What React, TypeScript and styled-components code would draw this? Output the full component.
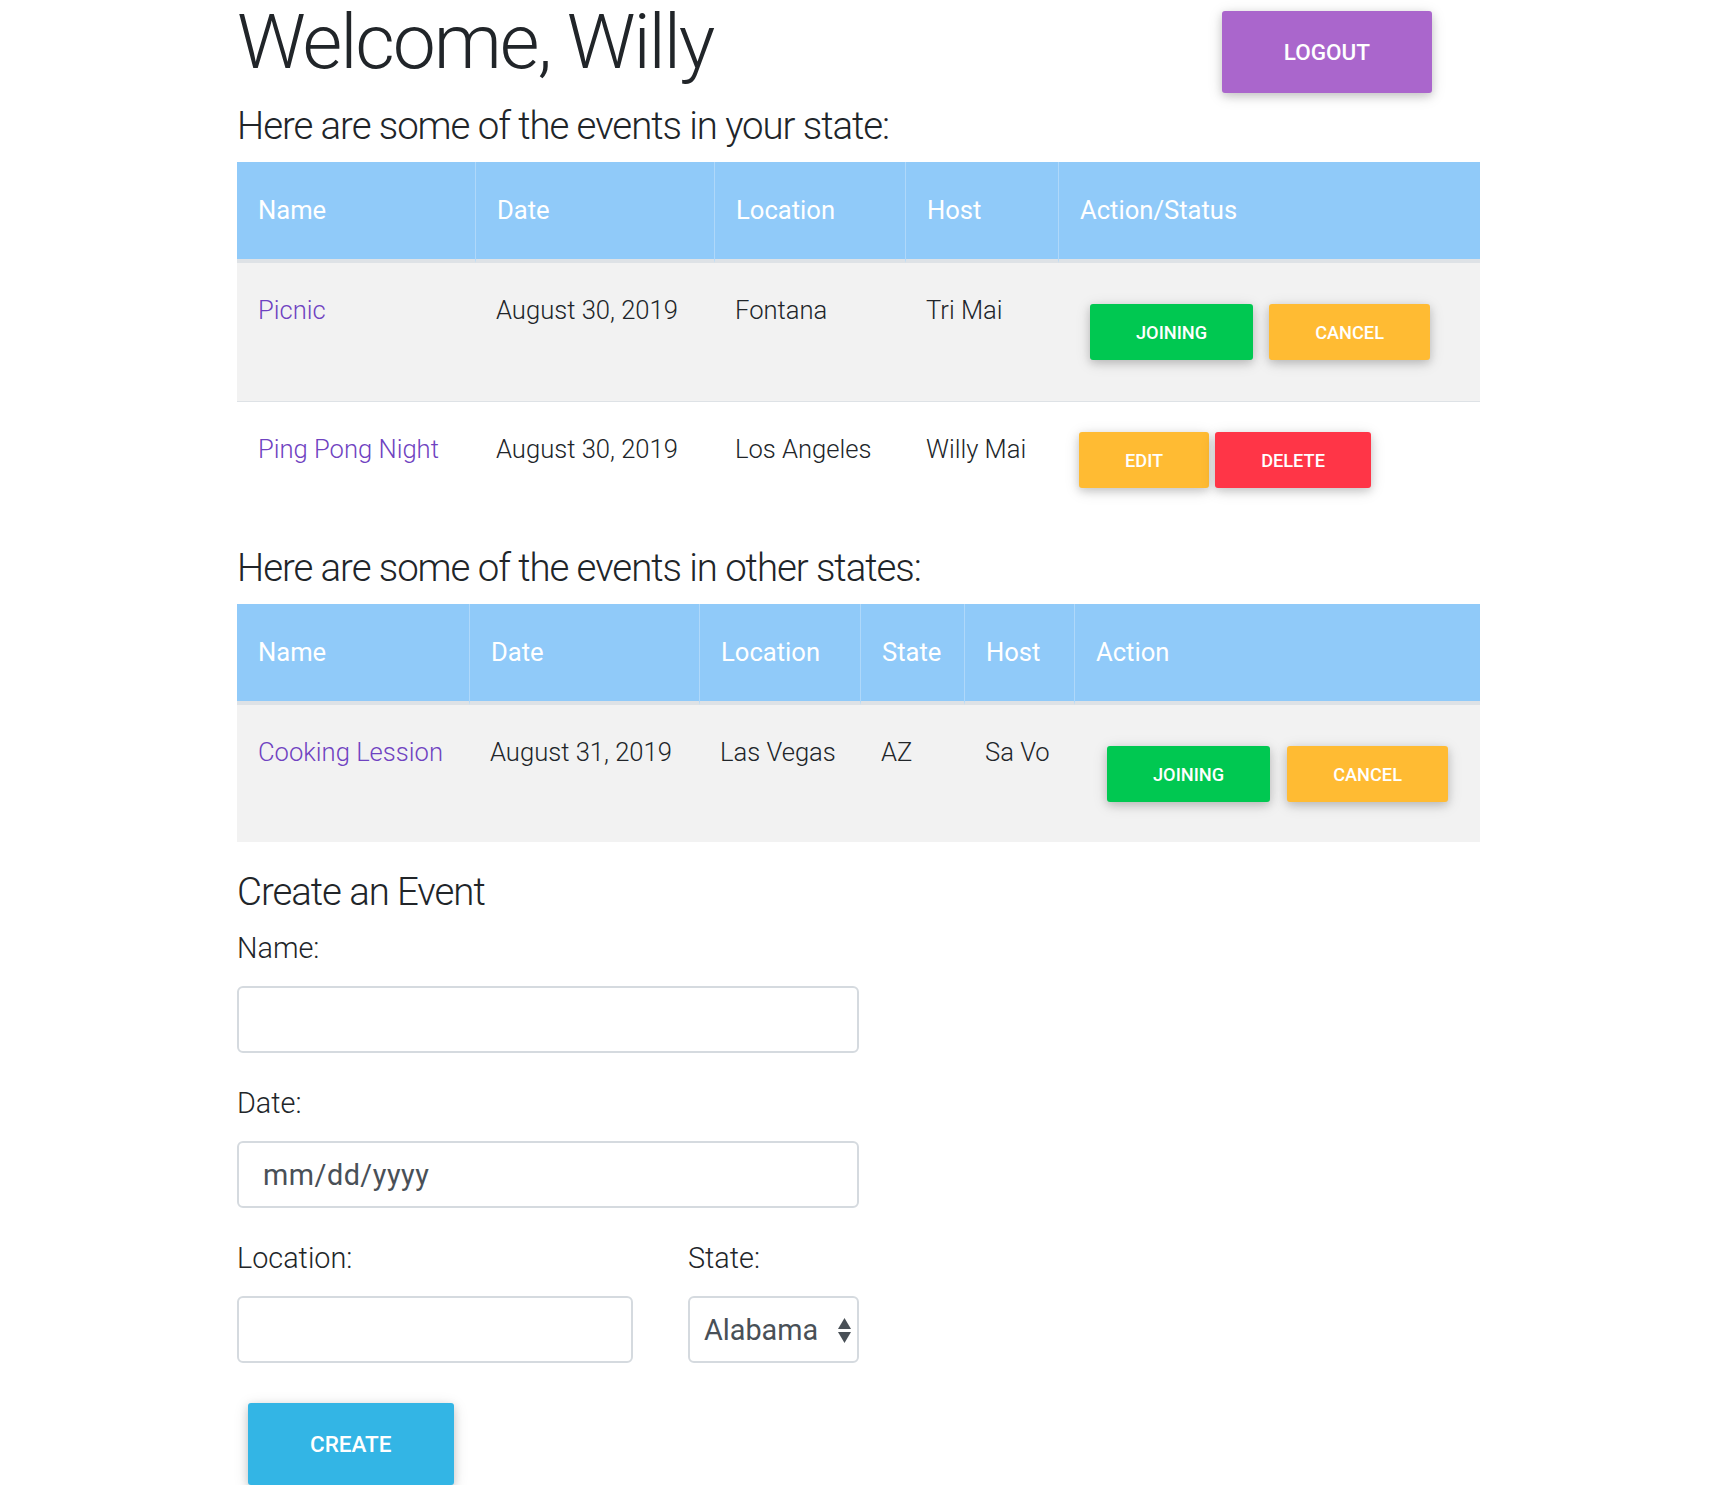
import React from "react";
import styled, { createGlobalStyle } from "styled-components";

const GlobalStyle = createGlobalStyle`
  html, body {
    margin: 0;
    padding: 0;
    background: #ffffff;
  }
  body {
    font-family: Roboto, "Noto Sans", "Liberation Sans", sans-serif;
    font-weight: 300;
    color: #212529;
  }
  *, *::before, *::after {
    box-sizing: border-box;
  }
`;

const FONT = `Roboto, "Noto Sans", "Liberation Sans", sans-serif`;

const Page = styled.main`
  width: 1243px;
  margin-left: calc(50% - 620.5px);
`;

const HeaderRow = styled.header`
  display: flex;
  justify-content: space-between;
  align-items: flex-start;
  padding-right: 48px;
  margin-bottom: 10px;
`;

const Title = styled.h1`
  margin: 0;
  font-family: ${FONT};
  font-size: 76.8px;
  line-height: 84px;
  font-weight: 300;
  letter-spacing: -2.1px;
  color: #212529;
`;

const SectionTitle = styled.h4<{ $mb?: number }>`
  margin: 0 0 ${(p) => p.$mb ?? 13}px;
  font-family: ${FONT};
  font-size: 38.4px;
  line-height: 46px;
  font-weight: 300;
  letter-spacing: -1.05px;
  color: #212529;
`;

const Button = styled.button<{ $bg: string; $size?: "sm" | "lg" }>`
  border: 0;
  border-radius: 3px;
  background: ${(p) => p.$bg};
  color: #ffffff;
  font-family: ${FONT};
  font-weight: 500;
  text-transform: uppercase;
  white-space: nowrap;
  cursor: pointer;
  height: ${(p) => (p.$size === "lg" ? 82 : 56)}px;
  padding: 0 ${(p) => (p.$size === "lg" ? 62 : 46)}px;
  font-size: ${(p) => (p.$size === "lg" ? 22.5 : 18.2)}px;
  box-shadow: 0 3px 8px 0 rgba(0, 0, 0, 0.16), 0 3px 16px 0 rgba(0, 0, 0, 0.12);
`;

const LogoutButton = styled(Button)`
  margin-top: 11px;
`;

const CreateButton = styled(Button)`
  margin: 40px 0 0 11px;
`;

const Table = styled.table`
  width: 100%;
  table-layout: fixed;
  border-collapse: separate;
  border-spacing: 0;
  margin-bottom: 27px;
`;

const Col = styled.col<{ $w: number }>`
  width: ${(p) => p.$w}px;
`;

const HeadCell = styled.th`
  background: #90caf9;
  color: #ffffff;
  font-family: ${FONT};
  font-weight: 400;
  font-size: 25.6px;
  line-height: 39px;
  text-align: left;
  padding: 29px 21px;
  white-space: nowrap;
  border-bottom: 4px solid #dee2e6;
  & + & {
    border-left: 1px solid rgba(255, 255, 255, 0.28);
  }
`;

const BodyRow = styled.tr<{ $striped?: boolean; $divider?: boolean }>`
  background: ${(p) => (p.$striped ? "#f2f2f2" : "#ffffff")};
  & > td {
    border-top: ${(p) => (p.$divider ? "1px solid #dee2e6" : "0")};
  }
`;

const Cell = styled.td`
  font-family: ${FONT};
  font-weight: 300;
  font-size: 25.6px;
  line-height: 39px;
  color: #212529;
  padding: 28px 21px;
  vertical-align: top;
  white-space: nowrap;
`;

const EventLink = styled.a`
  color: #6f42c1;
  text-decoration: none;
`;

const ActionGroup = styled.div<{ $gap: number; $mt: number; $mb: number; $ml: number }>`
  display: flex;
  gap: ${(p) => p.$gap}px;
  margin: ${(p) => p.$mt}px 0 ${(p) => p.$mb}px ${(p) => p.$ml}px;
`;

const Form = styled.form`
  width: 622px;
  display: flex;
  flex-direction: column;
  align-items: flex-start;
`;

const FieldGroup = styled.div`
  width: 100%;
  margin-bottom: 29px;
`;

const SplitRow = styled.div`
  width: 100%;
  display: grid;
  grid-template-columns: 396px 171px;
  column-gap: 55px;
`;

const Label = styled.label`
  display: block;
  font-family: ${FONT};
  font-weight: 300;
  font-size: 28.8px;
  line-height: 43px;
  margin-bottom: 16px;
  color: #212529;
`;

const TextInput = styled.input`
  display: block;
  width: 100%;
  height: 67px;
  border: 2px solid #d5dadf;
  border-radius: 6px;
  padding: 0 24px;
  font-family: ${FONT};
  font-weight: 400;
  font-size: 28.8px;
  letter-spacing: 0.5px;
  color: #495057;
  background: #ffffff;
  outline: none;
  &::placeholder {
    color: #495057;
    opacity: 1;
  }
`;

const SelectWrap = styled.div`
  position: relative;
  width: 100%;
`;

const Select = styled.select`
  display: block;
  width: 100%;
  height: 67px;
  appearance: none;
  -webkit-appearance: none;
  border: 2px solid #d5dadf;
  border-radius: 6px;
  padding: 0 30px 0 14px;
  font-family: ${FONT};
  font-weight: 400;
  font-size: 28.8px;
  color: #495057;
  background: #ffffff;
  outline: none;
`;

const SelectArrows = styled.svg`
  position: absolute;
  right: 8px;
  top: 22px;
  width: 13px;
  height: 25px;
  pointer-events: none;
`;

type Btn = { label: string; bg: string };

const JOIN_CANCEL: Btn[] = [
  { label: "Joining", bg: "#00c851" },
  { label: "Cancel", bg: "#ffbb33" },
];
const EDIT_DELETE: Btn[] = [
  { label: "Edit", bg: "#ffbb33" },
  { label: "Delete", bg: "#ff3547" },
];

const Actions: React.FC<{ items: Btn[]; gap: number; mt: number; mb: number; ml: number }> = ({
  items,
  gap,
  mt,
  mb,
  ml,
}) => (
  <ActionGroup $gap={gap} $mt={mt} $mb={mb} $ml={ml}>
    {items.map((b) => (
      <Button key={b.label} type="button" $bg={b.bg}>
        {b.label}
      </Button>
    ))}
  </ActionGroup>
);

export default function App() {
  return (
    <>
      <GlobalStyle />
      <Page>
        <HeaderRow>
          <Title>Welcome, Willy</Title>
          <LogoutButton type="button" $bg="#aa66cc" $size="lg">
            Logout
          </LogoutButton>
        </HeaderRow>

        <SectionTitle>Here are some of the events in your state:</SectionTitle>
        <Table>
          <colgroup>
            <Col $w={238} />
            <Col $w={239} />
            <Col $w={191} />
            <Col $w={153} />
            <Col $w={422} />
          </colgroup>
          <thead>
            <tr>
              <HeadCell>Name</HeadCell>
              <HeadCell>Date</HeadCell>
              <HeadCell>Location</HeadCell>
              <HeadCell>Host</HeadCell>
              <HeadCell>Action/Status</HeadCell>
            </tr>
          </thead>
          <tbody>
            <BodyRow $striped>
              <Cell>
                <EventLink href="#">Picnic</EventLink>
              </Cell>
              <Cell>August 30, 2019</Cell>
              <Cell>Fontana</Cell>
              <Cell>Tri Mai</Cell>
              <Cell>
                <Actions items={JOIN_CANCEL} gap={16} mt={13} mb={13} ml={11} />
              </Cell>
            </BodyRow>
            <BodyRow $divider>
              <Cell>
                <EventLink href="#">Ping Pong Night</EventLink>
              </Cell>
              <Cell>August 30, 2019</Cell>
              <Cell>Los Angeles</Cell>
              <Cell>Willy Mai</Cell>
              <Cell>
                <Actions items={EDIT_DELETE} gap={6} mt={2} mb={2} ml={0} />
              </Cell>
            </BodyRow>
          </tbody>
        </Table>

        <SectionTitle>Here are some of the events in other states:</SectionTitle>
        <Table>
          <colgroup>
            <Col $w={232} />
            <Col $w={230} />
            <Col $w={161} />
            <Col $w={104} />
            <Col $w={110} />
            <Col $w={406} />
          </colgroup>
          <thead>
            <tr>
              <HeadCell>Name</HeadCell>
              <HeadCell>Date</HeadCell>
              <HeadCell>Location</HeadCell>
              <HeadCell>State</HeadCell>
              <HeadCell>Host</HeadCell>
              <HeadCell>Action</HeadCell>
            </tr>
          </thead>
          <tbody>
            <BodyRow $striped>
              <Cell>
                <EventLink href="#">Cooking Lession</EventLink>
              </Cell>
              <Cell>August 31, 2019</Cell>
              <Cell>Las Vegas</Cell>
              <Cell>AZ</Cell>
              <Cell>Sa Vo</Cell>
              <Cell>
                <Actions items={JOIN_CANCEL} gap={17} mt={13} mb={12} ml={12} />
              </Cell>
            </BodyRow>
          </tbody>
        </Table>

        <SectionTitle $mb={12}>Create an Event</SectionTitle>
        <Form onSubmit={(e) => e.preventDefault()}>
          <FieldGroup>
            <Label htmlFor="ev-name">Name:</Label>
            <TextInput id="ev-name" type="text" />
          </FieldGroup>
          <FieldGroup>
            <Label htmlFor="ev-date">Date:</Label>
            <TextInput id="ev-date" type="text" placeholder="mm/dd/yyyy" />
          </FieldGroup>
          <SplitRow>
            <div>
              <Label htmlFor="ev-loc">Location:</Label>
              <TextInput id="ev-loc" type="text" />
            </div>
            <div>
              <Label htmlFor="ev-state">State:</Label>
              <SelectWrap>
                <Select id="ev-state" defaultValue="Alabama">
                  <option>Alabama</option>
                  <option>Alaska</option>
                  <option>Arizona</option>
                  <option>California</option>
                  <option>Nevada</option>
                </Select>
                <SelectArrows viewBox="0 0 13 25" aria-hidden="true">
                  <path d="M6.5 0 L13 11 L0 11 Z" fill="#495057" />
                  <path d="M0 14 L13 14 L6.5 25 Z" fill="#495057" />
                </SelectArrows>
              </SelectWrap>
            </div>
          </SplitRow>
          <CreateButton type="submit" $bg="#33b5e5" $size="lg">
            Create
          </CreateButton>
        </Form>
      </Page>
    </>
  );
}
